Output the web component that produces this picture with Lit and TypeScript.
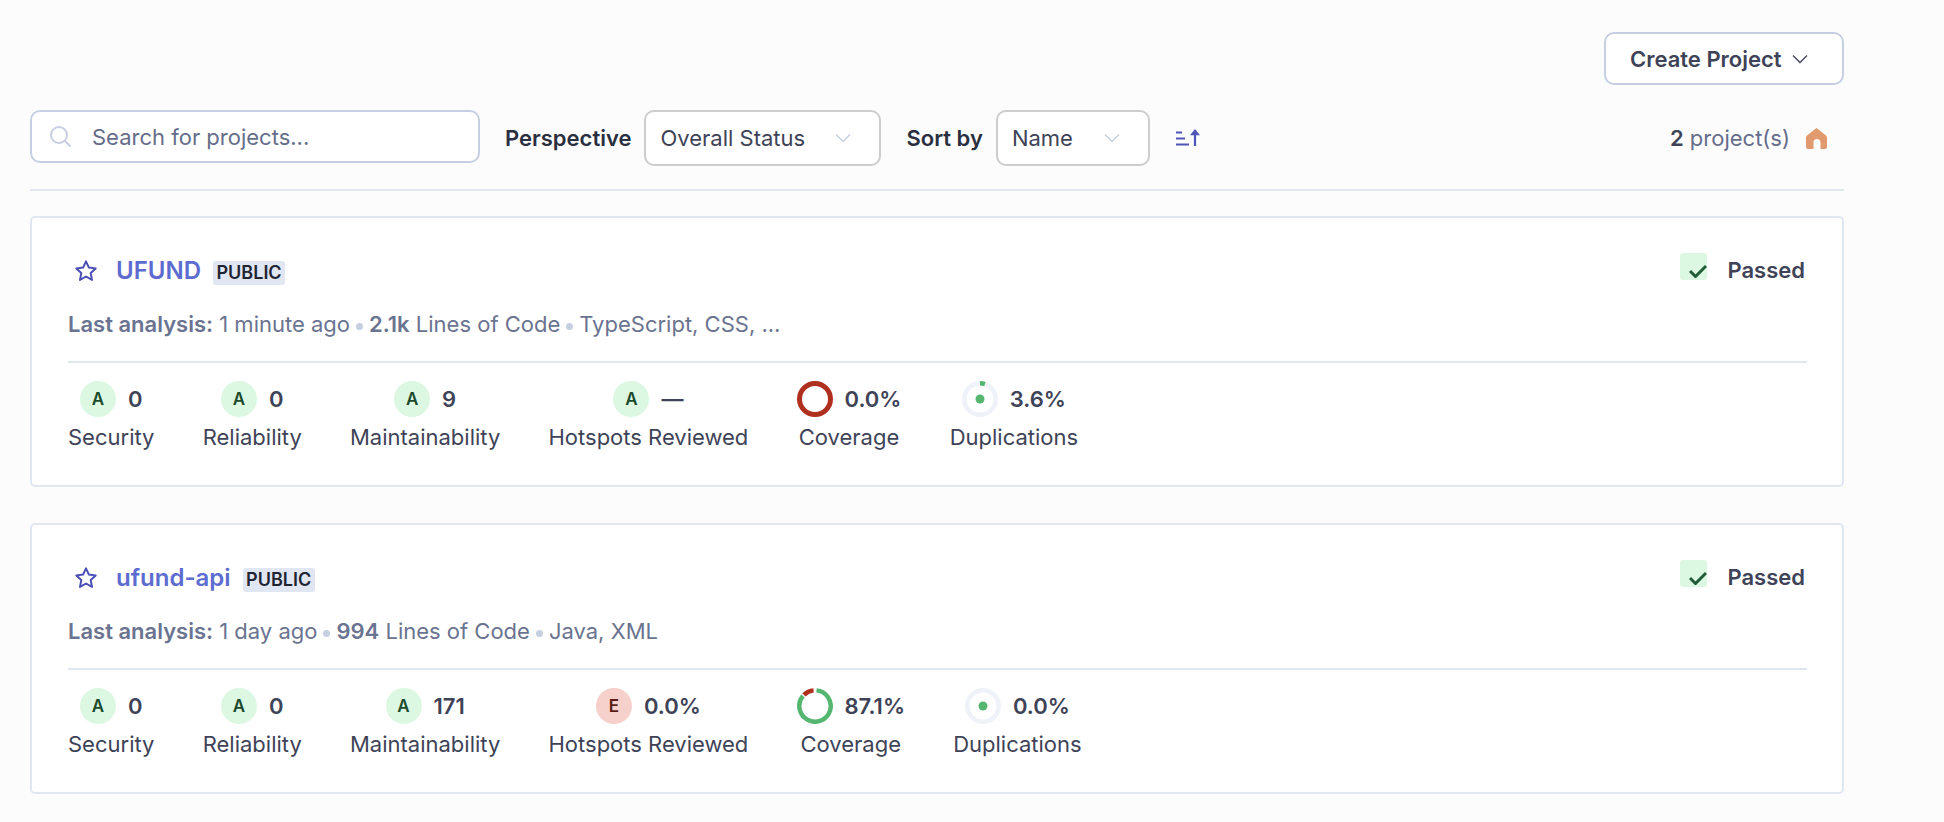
import { LitElement, html, css, svg } from "lit";
import { customElement } from "lit/decorators.js";

const RED = "#b0301f";
const GREEN = "#55b670";
const TRACK = "#eff2f9";

type Metric =
  | { kind: "rating"; grade: string; value: string; label: string }
  | { kind: "coverage"; pct: number; value: string; label: string }
  | { kind: "dup"; pct: number; value: string; label: string };

interface Project {
  name: string;
  analysis: string;
  loc: string;
  langs: string;
  metrics: Metric[];
}

const PROJECTS: Project[] = [
  {
    name: "UFUND",
    analysis: "1 minute ago",
    loc: "2.1k",
    langs: "TypeScript, CSS, ...",
    metrics: [
      { kind: "rating", grade: "A", value: "0", label: "Security" },
      { kind: "rating", grade: "A", value: "0", label: "Reliability" },
      { kind: "rating", grade: "A", value: "9", label: "Maintainability" },
      { kind: "rating", grade: "A", value: "—", label: "Hotspots Reviewed" },
      { kind: "coverage", pct: 0, value: "0.0%", label: "Coverage" },
      { kind: "dup", pct: 3.6, value: "3.6%", label: "Duplications" },
    ],
  },
  {
    name: "ufund-api",
    analysis: "1 day ago",
    loc: "994",
    langs: "Java, XML",
    metrics: [
      { kind: "rating", grade: "A", value: "0", label: "Security" },
      { kind: "rating", grade: "A", value: "0", label: "Reliability" },
      { kind: "rating", grade: "A", value: "171", label: "Maintainability" },
      { kind: "rating", grade: "E", value: "0.0%", label: "Hotspots Reviewed" },
      { kind: "coverage", pct: 87.1, value: "87.1%", label: "Coverage" },
      { kind: "dup", pct: 0, value: "0.0%", label: "Duplications" },
    ],
  },
];

// point on the ring, 0 = top, clockwise
function pt(r: number, pct: number) {
  const a = (pct / 100) * Math.PI * 2 - Math.PI / 2;
  return `${18 + r * Math.cos(a)} ${18 + r * Math.sin(a)}`;
}

function arc(r: number, from: number, to: number, color: string, width: number) {
  const large = to - from > 50 ? 1 : 0;
  return svg`<path d="M${pt(r, from)} A${r} ${r} 0 ${large} 1 ${pt(r, to)}" fill="none" stroke=${color} stroke-width=${width}></path>`;
}

const chevron = (color: string) => html`
  <svg class="chevron" width="16" height="16" viewBox="0 0 16 16" fill="none" stroke=${color} stroke-width="1.3">
    <path d="M1 4.5 8 11.5l7-7"></path>
  </svg>
`;

const star = html`
  <svg class="star" width="24" height="24" viewBox="0 0 24 24" fill="none" stroke="#4b50b5" stroke-width="2" stroke-linejoin="round">
    <path d="M12 2.4l2.9 6.2 6.8.8-5 4.7 1.3 6.8-6-3.4-6 3.4 1.3-6.8-5-4.7 6.8-.8z"></path>
  </svg>
`;

@customElement("app-root")
export class AppRoot extends LitElement {
  static styles = css`
    :host {
      display: block;
      box-sizing: border-box;
      min-height: 822px;
      padding: 32px 100px 0 30px;
      background: #fcfcfd;
      color: #3e4357;
      font-family: Inter, "Liberation Sans", sans-serif;
      font-size: 22px;
    }

    .top {
      display: flex;
      justify-content: flex-end;
      margin-bottom: 25px;
    }

    .create {
      display: flex;
      align-items: center;
      gap: 10px;
      box-sizing: border-box;
      width: 240px;
      height: 53px;
      padding: 0 24px;
      background: #fff;
      border: 2px solid #c6cfe2;
      border-radius: 10px;
      font-weight: 600;
      color: #3e4357;
      white-space: nowrap;
    }

    .filters {
      display: flex;
      align-items: center;
      height: 56px;
      padding-bottom: 23px;
      margin-bottom: 25px;
      border-bottom: 2px solid #e1e6f3;
    }

    .search {
      display: flex;
      align-items: center;
      box-sizing: border-box;
      width: 450px;
      height: 53px;
      margin-bottom: 3px;
      padding-left: 18px;
      background: #fff;
      border: 2px solid #c6cfe2;
      border-radius: 10px;
      color: #656d8a;
    }

    .search svg {
      margin-right: 21px;
    }

    .filter-label {
      font-weight: 600;
      color: #2a2f40;
      margin-left: 25px;
      margin-right: 13px;
    }

    .select {
      display: flex;
      align-items: center;
      justify-content: space-between;
      box-sizing: border-box;
      height: 56px;
      padding: 0 28px 0 14px;
      background: #fff;
      border: 2px solid #cdcdcd;
      border-radius: 10px;
      color: #3e4357;
    }

    .select.status {
      width: 237px;
    }

    .select.sort {
      width: 154px;
    }

    .sort-icon {
      margin-left: 25px;
    }

    .count {
      margin-left: auto;
      margin-right: 17px;
      display: flex;
      align-items: center;
      gap: 16px;
      color: #656d8a;
    }

    .count b {
      font-weight: 600;
      color: #3e4357;
    }

    .card {
      box-sizing: border-box;
      height: 271px;
      margin-bottom: 36px;
      padding: 36px 35px 0 36px;
      background: #fff;
      border: 2px solid #e1e6f3;
      border-radius: 5px;
    }

    .head {
      display: flex;
      align-items: flex-start;
      justify-content: space-between;
      height: 33px;
    }

    .title {
      display: flex;
      align-items: center;
      height: 33px;
      padding-left: 6px;
    }

    .star {
      margin-right: 18px;
    }

    .name {
      font-size: 24px;
      font-weight: 600;
      color: #5d6cd0;
    }

    .badge {
      margin-left: 12px;
      margin-top: 5px;
      padding: 2px 3.5px;
      background: #e1e6f3;
      border-radius: 3px;
      font-size: 18px;
      line-height: 20px;
      font-weight: 600;
      color: #1f2433;
    }

    .status-box {
      display: flex;
      align-items: flex-start;
      gap: 20px;
      margin-top: -1px;
      padding-right: 2px;
    }

    .check {
      display: flex;
      align-items: flex-end;
      justify-content: flex-end;
      box-sizing: border-box;
      width: 27px;
      height: 27px;
      padding-bottom: 2px;
      background: #dcf8e3;
      border-radius: 3px;
    }

    .passed {
      margin-top: 4px;
      font-weight: 600;
    }

    .meta {
      margin-top: 19px;
      height: 36px;
      line-height: 36px;
      color: #6a7390;
      white-space: nowrap;
    }

    .meta b {
      font-weight: 600;
    }

    .dot {
      display: inline-block;
      width: 7px;
      height: 7px;
      margin: 0 6px;
      border-radius: 50%;
      background: #c6cfe2;
      vertical-align: 2px;
    }

    .metrics {
      display: flex;
      gap: 48.2px;
      margin-top: 19px;
      padding-top: 18px;
      border-top: 2px solid #e1e6f3;
    }

    .metric {
      display: flex;
      flex-direction: column;
      align-items: center;
    }

    .measure {
      display: flex;
      align-items: center;
      gap: 12px;
      height: 36px;
      font-weight: 600;
    }

    .rating {
      display: flex;
      align-items: center;
      justify-content: center;
      width: 36px;
      height: 36px;
      border-radius: 50%;
      font-size: 17px;
      font-weight: 600;
    }

    .rating.A {
      background: #dcf8e3;
      color: #1c4a2c;
    }

    .rating.E {
      background: #f6d0cb;
      color: #591d15;
    }

    .label {
      margin-top: 7px;
      line-height: 26px;
      white-space: nowrap;
    }
  `;

  renderRing(m: Metric) {
    if (m.kind === "coverage") {
      return html`<svg width="36" height="36" viewBox="0 0 36 36">
        ${m.pct === 0
          ? svg`<circle cx="18" cy="18" r="15.5" fill="none" stroke=${RED} stroke-width="5"></circle>`
          : svg`${arc(15.7, 1.5, m.pct - 1, GREEN, 4.5)}${arc(15.7, m.pct + 0.5, 98.5, RED, 4.5)}`}
      </svg>`;
    }
    if (m.kind === "dup") {
      return html`<svg width="36" height="36" viewBox="0 0 36 36">
        <circle cx="18" cy="18" r="15.7" fill="none" stroke=${TRACK} stroke-width="4.5"></circle>
        <circle cx="18" cy="18" r="4.5" fill=${GREEN}></circle>
        ${m.pct > 0 ? arc(15.7, 0, m.pct + 1.5, GREEN, 4.5) : ""}
      </svg>`;
    }
    return html`<div class="rating ${m.grade}">${m.grade}</div>`;
  }

  renderMetric(m: Metric) {
    return html`
      <div class="metric">
        <div class="measure">${this.renderRing(m)}<span>${m.value}</span></div>
        <div class="label">${m.label}</div>
      </div>
    `;
  }

  renderCard(p: Project) {
    return html`
      <div class="card">
        <div class="head">
          <div class="title">
            ${star}
            <span class="name">${p.name}</span>
            <span class="badge">PUBLIC</span>
          </div>
          <div class="status-box">
            <div class="check">
              <svg width="18" height="14" viewBox="0 0 18 14" fill="none" stroke="#1f5c37" stroke-width="3">
                <path d="M1 7l5.5 5.5L17 2"></path>
              </svg>
            </div>
            <span class="passed">Passed</span>
          </div>
        </div>
        <div class="meta">
          <b>Last analysis:</b> ${p.analysis}<span class="dot"></span><b>${p.loc}</b> Lines of Code<span class="dot"></span>${p.langs}
        </div>
        <div class="metrics">${p.metrics.map((m) => this.renderMetric(m))}</div>
      </div>
    `;
  }

  render() {
    return html`
      <div class="top">
        <div class="create">Create Project ${chevron("#3e4357")}</div>
      </div>
      <div class="filters">
        <div class="search">
          <svg width="21" height="21" viewBox="0 0 21 21" fill="none" stroke="#c6cfe2" stroke-width="2">
            <circle cx="9" cy="9" r="8"></circle>
            <path d="M14.5 14.5 20.5 20.5"></path>
          </svg>
          Search for projects...
        </div>
        <span class="filter-label">Perspective</span>
        <div class="select status">Overall Status ${chevron("#c6cfe2")}</div>
        <span class="filter-label">Sort by</span>
        <div class="select sort">Name ${chevron("#c6cfe2")}</div>
        <svg class="sort-icon" width="26" height="18" viewBox="0 0 26 18" fill="#5055b8">
          <rect x="1" y="2.5" width="6" height="2"></rect>
          <rect x="1" y="8.5" width="9" height="2"></rect>
          <rect x="1" y="14.5" width="13" height="2"></rect>
          <path d="M20 0l5 6.2h-3.9V17h-2.2V6.2H15z"></path>
        </svg>
        <div class="count">
          <span><b>2</b> project(s)</span>
          <svg width="21" height="21" viewBox="0 0 21 21" fill="#e09a6e">
            <path d="M10.5 0 20 7.5Q21 8.3 21 9.5V19a2 2 0 0 1-2 2h-4.5V14.5a3.5 3.5 0 0 0-7 0V21H2a2 2 0 0 1-2-2V9.5Q0 8.3 1 7.5z"></path>
          </svg>
        </div>
      </div>
      ${PROJECTS.map((p) => this.renderCard(p))}
    `;
  }
}
